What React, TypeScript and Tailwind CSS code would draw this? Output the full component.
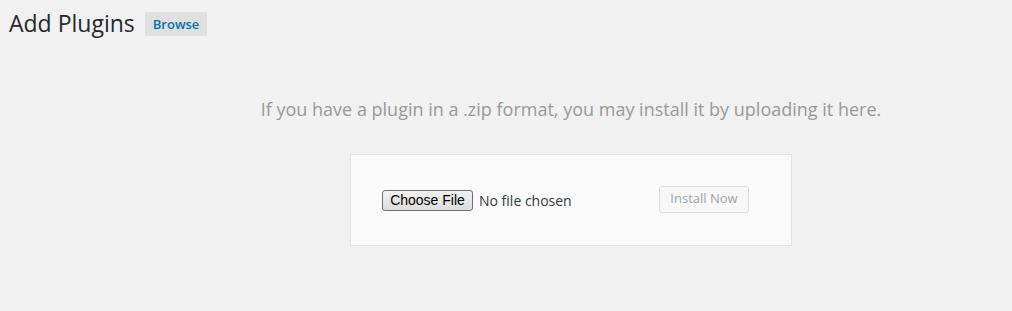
const App = () => {
  return (
    <div className="min-h-[311px] w-full bg-[#f1f1f1] font-['Open_Sans',sans-serif] text-[#23282d]">
      <div className="flex items-center pl-[9px] pt-[9px]">
        <h1 className="text-[23px] font-normal leading-[29px]">Add Plugins</h1>
        <span className="ml-[10px] mt-[1px] rounded-[2px] bg-[#e0e0e0] px-[8px] pb-[3px] pt-[4px] text-[13px] font-semibold leading-[17px] text-[#0073aa]">
          Browse
        </span>
      </div>

      <div className="flex w-full flex-col items-center pl-[130px] pt-[59px]">
        <p className="text-[18px] leading-[24px] text-[#999]">
          If you have a plugin in a .zip format, you may install it by uploading it here.
        </p>
        <div className="mt-[33px] flex h-[92px] w-[442px] items-center justify-between border border-[#e5e5e5] bg-[#fafafa] pl-[31px] pr-[42px]">
          <div className="flex items-center gap-[6px]">
            <span className="flex h-[21px] w-[91px] items-center justify-center rounded-[3px] border border-[#707070] bg-gradient-to-b from-[#f2f2f2] to-[#dcdcdc] font-['Liberation_Sans',sans-serif] text-[14px] text-black">
              Choose File
            </span>
            <span className="text-[14px] text-[#32373c]">No file chosen</span>
          </div>
          <span className="mt-[-2px] flex h-[27px] w-[90px] items-center justify-center rounded-[3px] border border-[#ddd] bg-[#f7f7f7] text-[13px] text-[#a0a5aa]">
            Install Now
          </span>
        </div>
      </div>
    </div>
  );
};

export default App;
